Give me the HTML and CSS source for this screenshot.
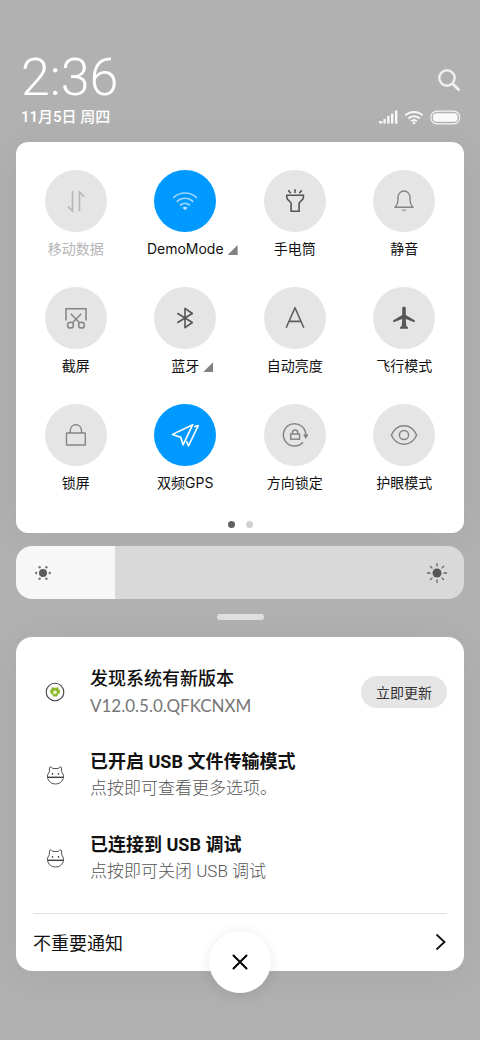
FILE: index.html
```html
<!DOCTYPE html>
<html lang="zh-CN">
<head>
<meta charset="utf-8">
<meta name="viewport" content="width=device-width, initial-scale=1">
<title>控制中心</title>
<link rel="stylesheet" href="styles.css">
</head>
<body>
<main class="shade">
  <header class="header">
    <div class="header-row">
      <time class="clock">2:36</time>
      <button class="search" type="button" aria-label="搜索">
        <svg width="24" height="24" viewBox="0 0 24 24" fill="none" stroke="#f0f0f0" stroke-width="2.4" stroke-linecap="round"><circle cx="10" cy="10" r="7.7"/><path d="M15.7 15.7L21.5 21.5" stroke-width="3"/></svg>
      </button>
    </div>
    <div class="header-row status-row">
      <span class="date">11月5日 周四</span>
      <div class="status">
        <svg width="19" height="14" viewBox="0 0 19 14" fill="#f8f8f8"><rect x="0" y="11" width="3.4" height="2.6" rx=".8"/><rect x="4.4" y="9" width="2.4" height="4.6"/><rect x="8.2" y="6" width="2.4" height="7.6"/><rect x="12" y="3.5" width="2.4" height="10.1"/><rect x="16" y=".5" width="2.4" height="13.1"/></svg>
        <svg width="20" height="15" viewBox="0 0 20 15" fill="none" stroke="#f8f8f8" stroke-width="2"><path d="M1.3 5.4a12.5 12.5 0 0 1 17.4 0M4.3 8.5a8.2 8.2 0 0 1 11.4 0M7.2 11.3a4.2 4.2 0 0 1 5.6 0"/><circle cx="10" cy="13" r="1.3" fill="#f8f8f8" stroke="none"/></svg>
        <svg width="31" height="15" viewBox="0 0 31 15"><rect x=".8" y="1.2" width="29" height="12.6" rx="6.3" fill="none" stroke="#f4f4f4" stroke-width="1.2"/><rect x="2.9" y="3.2" width="24.8" height="8.6" rx="4" fill="#fafafa"/></svg>
      </div>
    </div>
  </header>

  <section class="card toggles" aria-label="快捷开关">
    <div class="grid">
      <button class="tile disabled" type="button"><span class="disc">
        <svg width="32" height="32" viewBox="0 0 32 32" fill="none" stroke="#b6b6b6" stroke-width="1.6"><path d="M12.5 6v20L8 21.5M19.5 26V7L24 11.8"/></svg></span>
        <span class="label">移动数据</span></button>
      <button class="tile on" type="button" aria-pressed="true"><span class="disc">
        <svg width="32" height="32" viewBox="0 0 32 32" fill="none" stroke="#9cd6ff" stroke-width="1.7" stroke-linecap="round"><path d="M4.8 12.4a16.5 16.5 0 0 1 22.4 0M8.2 16.3a11.5 11.5 0 0 1 15.6 0M11.6 20a6.7 6.7 0 0 1 8.8 0"/><path d="M13.4 22.7q2.6-2 5.2 0L16 25.2z" fill="#b9e2ff" stroke="none"/></svg></span>
        <span class="label">DemoMode<i class="more"></i></span></button>
      <button class="tile" type="button"><span class="disc">
        <svg width="32" height="32" viewBox="0 0 32 32" fill="none" stroke="#555" stroke-width="1.6"><path d="M7.8 10.3h16.6v2.2c0 3-4.3 3.6-4.3 6.1v7.7h-8v-7.7c0-2.5-4.3-3.1-4.3-6.1zM16 4.2v3.8M9.2 5.2l2.5 3M22.8 5.2l-2.5 3"/></svg></span>
        <span class="label">手电筒</span></button>
      <button class="tile" type="button"><span class="disc">
        <svg width="32" height="32" viewBox="0 0 32 32" fill="none" stroke="#858585" stroke-width="1.4" stroke-linejoin="round"><path d="M7 22.3c2.1-2.2 3-4.4 3-7.2v-2.6c0-3.6 2.6-6.5 6-6.5s6 2.9 6 6.5v2.6c0 2.8.9 5 3 7.2z"/><path d="M13.2 24.8h5.6q-2.8 2.2-5.6 0z" fill="#858585" stroke="none"/></svg></span>
        <span class="label">静音</span></button>

      <button class="tile" type="button"><span class="disc">
        <svg width="32" height="32" viewBox="0 0 32 32" fill="none" stroke="#858585" stroke-width="1.5"><path d="M6 18.5V6.7h20v11.8M10.8 11.8l9 9.3M21.2 11.8l-9 9.3"/><circle cx="10.5" cy="23.2" r="2.9"/><circle cx="21.5" cy="23.2" r="2.9"/></svg></span>
        <span class="label">截屏</span></button>
      <button class="tile" type="button"><span class="disc">
        <svg width="32" height="32" viewBox="0 0 32 32" fill="none" stroke="#555" stroke-width="1.6" stroke-linejoin="round"><path d="M8.3 11.2l15 9.3-7.3 5.2V6.3l7.3 5.2-15 9.3"/></svg></span>
        <span class="label">蓝牙<i class="more"></i></span></button>
      <button class="tile" type="button"><span class="disc">
        <svg width="32" height="32" viewBox="0 0 32 32" fill="none" stroke="#5e5e5e" stroke-width="1.6" stroke-linejoin="round"><path d="M7.2 25.8L16 5.8l8.8 20M9.8 19.4h12.4"/></svg></span>
        <span class="label">自动亮度</span></button>
      <button class="tile" type="button"><span class="disc">
        <svg width="32" height="32" viewBox="0 0 32 32" fill="#585858"><path d="M14.2 6.3a1.8 1.8 0 0 1 3.6 0v6.6l8.8 5.3q.8 2-.2 2l-8.6-3.2.5 7 1.7 1.2v1.6h-8v-1.600l1.700-1.200.5-7-8.600 3.200q-1 0-.2-2l8.800-5.300z"/></svg></span>
        <span class="label">飞行模式</span></button>

      <button class="tile" type="button"><span class="disc">
        <svg width="32" height="32" viewBox="0 0 32 32" fill="none" stroke="#858585" stroke-width="1.4"><rect x="6.5" y="14" width="18.8" height="12" rx=".5"/><path d="M10.3 14v-2.2c0-3.5 2.4-6 5.6-6s5.600 2.500 5.600 6V14"/></svg></span>
        <span class="label">锁屏</span></button>
      <button class="tile on" type="button" aria-pressed="true"><span class="disc">
        <svg width="32" height="32" viewBox="0 0 32 32" fill="none" stroke="#fff" stroke-width="1.6" stroke-linejoin="round"><path d="M23.700 5.700L3.500 15.400l8.200 2.800 2.400 7.600zM25.200 7.800l4-1.200L19.400 27l-1.900-5"/></svg></span>
        <span class="label">双频GPS</span></button>
      <button class="tile" type="button"><span class="disc">
        <svg width="32" height="32" viewBox="0 0 32 32" fill="none" stroke="#858585" stroke-width="1.5"><path d="M24 23.300a11.200 11.200 0 1 1 2.800-7.300"/><path d="M24.800 15.800h4l-2 3.500z" fill="#858585" stroke-width="1"/><rect x="11.700" y="15" width="8.800" height="5.200"/><path d="M13.400 15v-1.300a2.700 2.700 0 0 1 5.400 0V15"/></svg></span>
        <span class="label">方向锁定</span></button>
      <button class="tile" type="button"><span class="disc">
        <svg width="32" height="32" viewBox="0 0 32 32" fill="none" stroke="#858585" stroke-width="1.5"><path d="M3.300 16C6 10 10.800 6.800 16 6.800S26 10 28.700 16C26 22 21.200 25.200 16 25.200S6 22 3.300 16z"/><circle cx="16" cy="16" r="4.600"/></svg></span>
        <span class="label">护眼模式</span></button>
    </div>
    <div class="pager"><i class="dot current"></i><i class="dot"></i></div>
  </section>

  <div class="brightness">
    <input class="slider" type="range" min="0" max="100" value="22" aria-label="亮度">
    <svg class="sun low" width="18" height="18" viewBox="0 0 18 18" fill="#5c5c5c"><circle cx="9" cy="9" r="4"/><g fill="#777"><circle cx="2.200" cy="9" r="1.200"/><circle cx="15.800" cy="9" r="1.200"/><circle cx="5.600" cy="3.200" r="1.200"/><circle cx="12.400" cy="3.200" r="1.200"/><circle cx="5.600" cy="14.800" r="1.200"/><circle cx="12.400" cy="14.800" r="1.200"/></g></svg>
    <svg class="sun high" width="22" height="22" viewBox="0 0 22 22"><circle cx="11" cy="11" r="4.500" fill="#555"/><path d="M11 1v3.500M11 17.500V21M1 11h3.500M17.500 11H21M4 4l2.400 2.400M15.600 15.600L18 18M4 18l2.400-2.400M15.600 6.400L18 4" stroke="#6a6a6a" stroke-width="1.300"/></svg>
  </div>

  <div class="handle"></div>

  <section class="card notices" aria-label="通知">
    <article class="notice">
      <svg class="app" width="20" height="20" viewBox="0 0 20 20"><circle cx="10" cy="10" r="8.800" fill="#fff" stroke="#444" stroke-width="1.100"/><path d="M7 5l1.500.8h3L13 5l.6 2 1.400 1.500-.4 3-1.600.5-.8 2.500H8.200l-1-2.500-1.800-.6L5.200 8.500 6.500 7z" fill="#8cb82b"/><circle cx="10" cy="10.300" r="1.900" fill="#e8f2d0"/></svg>
      <div class="text"><h2 class="title light">发现系统有新版本</h2><p class="sub version">V12.0.5.0.QFKCNXM</p></div>
      <button class="update" type="button">立即更新</button>
    </article>
    <article class="notice">
      <svg class="app" width="20" height="20" viewBox="0 0 20 20" fill="none" stroke="#555" stroke-width="1"><path d="M4.300 6.800L4.500 2.800q.3-1.600 1.800-.6l1.700 1.300h5l1.700-1.300q1.500-1 1.800.6l.2 4q3 3.200 1.500 7a8.300 8.300 0 0 1-15.400 0q-1.500-3.800 1.500-7z"/><path d="M2.600 12.300h15.800" stroke="#333" stroke-width="1.300"/><path d="M7.500 8v1.800M13.500 8v1.800" stroke="#444" stroke-width="1.300"/></svg>
      <div class="text"><h2 class="title">已开启 USB 文件传输模式</h2><p class="sub">点按即可查看更多选项。</p></div>
    </article>
    <article class="notice">
      <svg class="app" width="20" height="20" viewBox="0 0 20 20" fill="none" stroke="#555" stroke-width="1"><path d="M4.300 6.800L4.500 2.800q.3-1.600 1.800-.6l1.700 1.300h5l1.700-1.300q1.500-1 1.800.6l.2 4q3 3.200 1.500 7a8.300 8.300 0 0 1-15.400 0q-1.500-3.800 1.500-7z"/><path d="M2.600 12.300h15.800" stroke="#333" stroke-width="1.300"/><path d="M7.500 8v1.800M13.500 8v1.800" stroke="#444" stroke-width="1.300"/></svg>
      <div class="text"><h2 class="title">已连接到 USB 调试</h2><p class="sub">点按即可关闭 USB 调试</p></div>
    </article>
    <a class="minor" href="#minor"><span>不重要通知</span>
      <svg width="12" height="18" viewBox="0 0 12 18" fill="none" stroke="#111" stroke-width="1.800" stroke-linecap="round"><path d="M2 2l7.500 7L2 16"/></svg></a>
    <button class="close" type="button" aria-label="清除通知">
      <svg width="18" height="18" viewBox="0 0 18 18" stroke="#000" stroke-width="2" stroke-linecap="round"><path d="M2.500 2.500l13 13M15.500 2.500l-13 13"/></svg></button>
  </section>
</main>
</body>
</html>
```
FILE: styles.css
```css
* { box-sizing: border-box; }
body {
  margin: 0;
  min-height: 100vh;
  background: #b1b1b1;
  color: #111;
  font-family: Inter, "Noto Sans CJK SC", sans-serif;
}
button {
  border: 0;
  padding: 0;
  background: none;
  font: inherit;
  color: inherit;
}
svg { display: block; flex: none; }
.shade { padding: 50px 16px 68px; }

.header { padding: 0 3px 14px 5px; }
.header-row {
  display: flex;
  justify-content: space-between;
  align-items: center;
}
.clock {
  font-family: Roboto, sans-serif;
  font-size: 52px;
  line-height: 56px;
  font-weight: 300;
  color: #fff;
}
.search { margin-top: 4px; }
.status-row { height: 22px; }
.date {
  font-family: Roboto, "Noto Sans CJK SC", sans-serif;
  font-size: 15px;
  line-height: 22px;
  font-weight: 500;
  color: #fff;
}
.status { display: flex; align-items: center; gap: 6px; }

.card {
  background: #fff;
  border-radius: 16px;
  box-shadow: 0 6px 40px rgba(0, 0, 0, 0.06);
}
.toggles { padding: 28px 5px 5px; border-radius: 12px; }
.grid {
  display: grid;
  grid-template-columns: repeat(4, 1fr);
  row-gap: 28px;
}
.tile {
  display: flex;
  flex-direction: column;
  align-items: center;
  gap: 7px;
}
.disc {
  display: grid;
  place-items: center;
  width: 62px;
  height: 62px;
  border-radius: 50%;
  background: #e5e5e5;
}
.on .disc { background: #0099ff; }
.label {
  position: relative;
  font-size: 14px;
  line-height: 20px;
  white-space: nowrap;
}
.disabled .label { color: #b5b5b5; }
.more {
  position: absolute;
  left: 100%;
  bottom: 4px;
  width: 10px;
  height: 10px;
  margin-left: 4px;
  background: #828282;
  clip-path: polygon(100% 0, 100% 100%, 0 100%);
}
.pager {
  display: flex;
  justify-content: center;
  gap: 11px;
  padding-top: 28px;
}
.dot {
  width: 7px;
  height: 7px;
  border-radius: 50%;
  background: #d0d0d0;
}
.dot.current { background: #606060; }

.brightness { position: relative; margin-top: 13px; }
.slider {
  appearance: none;
  display: block;
  width: 100%;
  height: 53px;
  margin: 0;
  border-radius: 16px;
  background: linear-gradient(to right, #f7f7f7 22%, #d9d9d9 22%);
}
.slider::-webkit-slider-thumb {
  appearance: none;
  width: 1px;
  height: 53px;
  background: transparent;
}
.sun {
  position: absolute;
  top: 0;
  bottom: 0;
  margin: auto 0;
  pointer-events: none;
}
.low { left: 18px; }
.high { right: 16px; }

.handle {
  width: 47px;
  height: 6px;
  margin: 15px auto 17px;
  border-radius: 3px;
  background: #e0e0e0;
}

.notices { position: relative; padding: 28px 17px 0; }
.notice {
  display: flex;
  align-items: center;
  gap: 25px;
  padding-left: 12px;
  margin-bottom: 29px;
}
.notice:last-of-type { margin-bottom: 28px; }
.text { flex: 1; }
.title, .sub {
  margin: 0;
  line-height: 27px;
  font-family: Roboto, "Noto Sans CJK SC", sans-serif;
}
.title { font-size: 18px; font-weight: 700; }
.title.light { font-weight: 500; }
.sub {
  font-size: 17px;
  font-weight: 300;
  color: #555;
}
.sub.version {
  font-family: Lato, sans-serif;
  font-weight: 400;
  color: #777;
}
.update {
  height: 32px;
  padding: 0 15px;
  border-radius: 16px;
  background: #e5e5e5;
  color: #333;
  font-size: 14px;
}
.minor {
  display: flex;
  justify-content: space-between;
  align-items: center;
  height: 58px;
  padding-bottom: 2px;
  border-top: 1px solid #e2e2e2;
  color: #111;
  font-size: 18px;
  text-decoration: none;
}
.close {
  position: absolute;
  left: 50%;
  bottom: -22px;
  display: grid;
  place-items: center;
  width: 62px;
  height: 62px;
  margin-left: -31px;
  border-radius: 50%;
  background: #fff;
  box-shadow: 0 2px 14px rgba(0, 0, 0, 0.09);
}
```
